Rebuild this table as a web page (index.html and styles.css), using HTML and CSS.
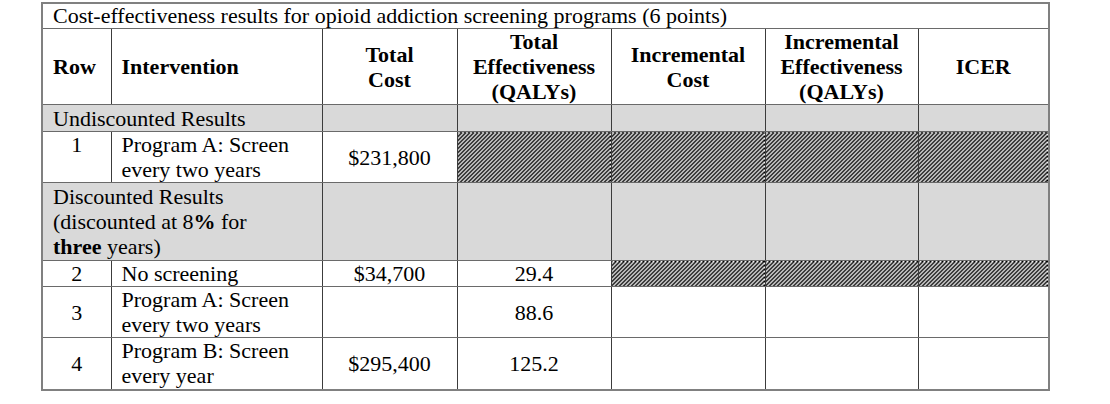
FILE: index.html
```html
<!DOCTYPE html>
<html>
<head>
<meta charset="utf-8">
<link rel="stylesheet" href="styles.css">
</head>
<body>
<div class="page">
<table class="ce">
  <colgroup>
    <col class="c-row"><col class="c-int"><col class="c-cost"><col class="c-eff"><col class="c-icost"><col class="c-ieff"><col class="c-icer">
  </colgroup>
  <tr class="title-row">
    <td colspan="7" class="left">Cost-effectiveness results for opioid addiction screening programs (6 points)</td>
  </tr>
  <tr class="head">
    <th class="left">Row</th>
    <th class="left">Intervention</th>
    <th>Total<br>Cost</th>
    <th>Total<br>Effectiveness<br>(QALYs)</th>
    <th>Incremental<br>Cost</th>
    <th>Incremental<br>Effectiveness<br>(QALYs)</th>
    <th>ICER</th>
  </tr>
  <tr class="gray">
    <td colspan="2" class="left">Undiscounted Results</td>
    <td></td><td></td><td></td><td></td><td></td>
  </tr>
  <tr>
    <td class="top">1</td>
    <td class="left">Program A: Screen<br>every two years</td>
    <td>$231,800</td>
    <td class="hatch"></td><td class="hatch"></td><td class="hatch"></td><td class="hatch"></td>
  </tr>
  <tr class="gray tall">
    <td colspan="2" class="left">Discounted Results<br>(discounted at 8<b>%</b> for<br><b>three</b> years)</td>
    <td></td><td></td><td></td><td></td><td></td>
  </tr>
  <tr>
    <td>2</td>
    <td class="left">No screening</td>
    <td>$34,700</td>
    <td>29.4</td>
    <td class="hatch"></td><td class="hatch"></td><td class="hatch"></td>
  </tr>
  <tr>
    <td>3</td>
    <td class="left">Program A: Screen<br>every two years</td>
    <td></td>
    <td>88.6</td>
    <td></td><td></td><td></td>
  </tr>
  <tr class="last">
    <td>4</td>
    <td class="left">Program B: Screen<br>every year</td>
    <td>$295,400</td>
    <td>125.2</td>
    <td></td><td></td><td></td>
  </tr>
</table>
</div>
</body>
</html>
```

FILE: styles.css
```css
html, body {
  margin: 0;
  padding: 0;
  background: #ffffff;
}

.page {
  padding: 2px 0 0 41px;
}

.ce {
  border-collapse: collapse;
  table-layout: fixed;
  width: 1007px;
  font-family: "Liberation Serif", "Times New Roman", serif;
  font-size: 22px;
  line-height: 25px;
  color: #000;
  border: 2px solid #808080;
}

.c-row { width: 69px; }
.c-int { width: 211px; }
.c-cost { width: 135px; }
.c-eff { width: 154px; }
.c-icost { width: 154px; }
.c-ieff { width: 153px; }
.c-icer { width: 131px; }

.ce td, .ce th {
  border-top: 1px solid #6a6a6a;
  border-bottom: 1px solid #6a6a6a;
  border-left: 1px solid #3c3c3c;
  border-right: 1px solid #3c3c3c;
  padding: 0 8px;
  text-align: center;
  vertical-align: middle;
  white-space: nowrap;
}

.title-row td {
  line-height: 24px;
}

.ce th {
  font-weight: bold;
}

.ce .left {
  text-align: left;
  padding-left: 10px;
}

.ce .top {
  vertical-align: top;
}

.gray td {
  background: #d9d9d9;
  padding-top: 1px;
}

.tall td {
  padding-bottom: 1px;
}

.last td {
  padding-bottom: 1px;
}

.ce td.hatch {
  background: repeating-linear-gradient(135deg, #000 0 1.25px, #f4f4f4 1.25px 2.828px);
}

.ce b {
  font-weight: bold;
}
```
